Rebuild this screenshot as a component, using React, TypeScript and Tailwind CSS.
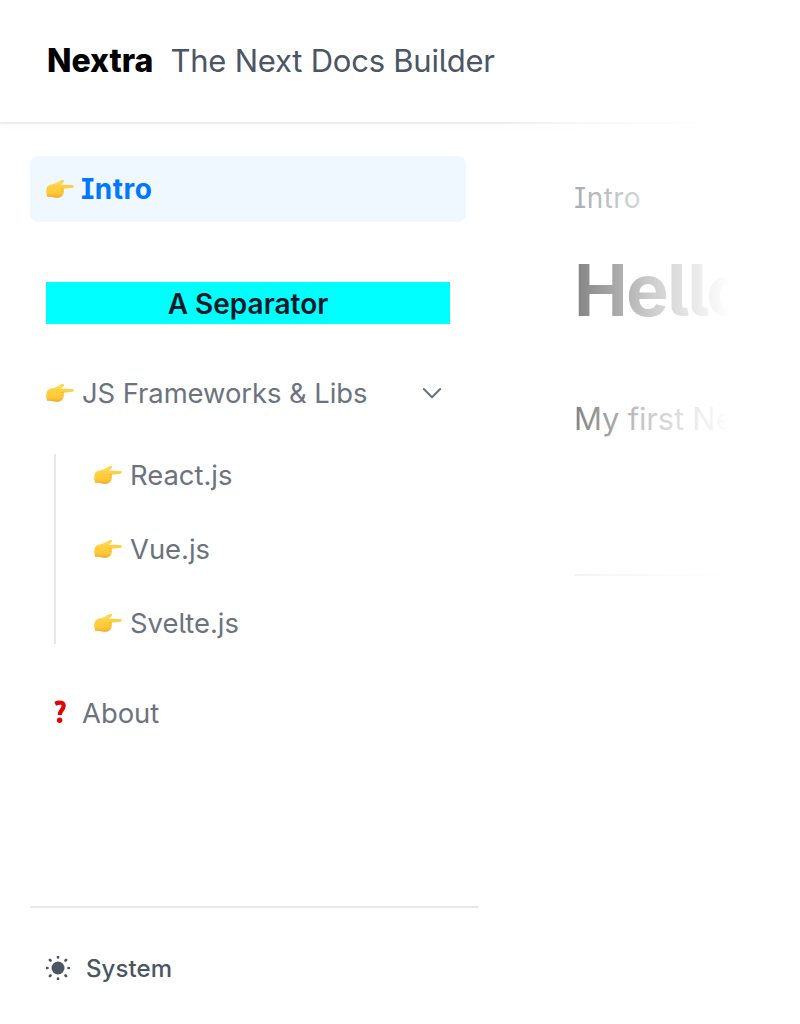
import type { ReactNode } from 'react';

function PointingHand() {
  return (
    <svg className="h-7 w-7 shrink-0" viewBox="0 0 28 28" aria-label="pointing right">
      <defs>
        <linearGradient id="skin" x1="0" y1="0" x2="0" y2="1">
          <stop offset="0" stopColor="#ffd64a" />
          <stop offset="0.75" stopColor="#ffc938" />
          <stop offset="1" stopColor="#f4b02a" />
        </linearGradient>
      </defs>
      <path
        d="M.4 14.2C.8 11.2 3.3 9.6 6.6 9.2C10.5 8.9 12.7 6.3 16 5.1C17.7 4.6 18.8 5.8 17.7 7.1C16.8 8.1 15.5 8.6 15.1 9.8L26.3 9.9C28.3 9.9 28.4 12.6 26.3 12.8L17.6 13.8C18.3 14.9 18.2 16 17.5 16.8C18 18 17.4 19.1 16.6 19.6C16.5 21.3 15.2 22.3 13.2 22.5C9.9 22.9 7.5 22.2 5.3 21.5L1.2 21.4C.2 19.5.1 16.6.4 14.2Z"
        fill="url(#skin)"
      />
      <path d="M17.5 13.8L15.3 13.5M17.3 16.8L15.2 16.7M16.4 19.7L14.5 19.6M1.2 21.3L5.3 21.4Q9 22.7 13.2 22.3" fill="none" stroke="#e39b22" strokeWidth=".6" />
      <path d="M9 10.2Q12.5 9.2 15.7 6.6" fill="none" stroke="#ffe06a" strokeWidth=".8" />
    </svg>
  );
}

function SidebarLink({ children }: { children: ReactNode }) {
  return (
    <a className="flex h-[66px] shrink-0 items-center px-4">
      <PointingHand />
      <span className="ml-2 text-[27.4px]">{children}</span>
    </a>
  );
}

export default function App() {
  return (
    <div className="relative h-[1024px] w-[800px] overflow-hidden bg-white font-['Inter',sans-serif] text-[28px] leading-[42px] text-gray-500 antialiased [font-feature-settings:'ss02'_1]">
      <header className="flex h-[122px] items-center pl-[47px] shadow-[0_2px_0_rgba(0,0,0,.06),0_4px_8px_rgba(0,0,0,.02)]">
        <span className="text-[32px] font-extrabold text-black">Nextra</span>
        <span className="ml-[17px] text-[31px] tracking-[-.22px] text-[#4b5563]">The Next Docs Builder</span>
      </header>
      <div className="flex h-[902px]">
        <aside className="flex w-[478px] flex-col pl-[30px] pt-[34px]">
          <nav className="w-[436px] text-[#6b7280]">
            <a className="flex h-[66px] items-center rounded-lg bg-[#eff7ff] px-4 font-bold text-[#0077ff]">
              <PointingHand />
              <span className="ml-[7px] tracking-[.5px]">Intro</span>
            </a>
            <div className="mx-4 mt-[60px] h-[42px] bg-[#00ffff] pt-px text-center font-semibold text-[#111827]">A Separator</div>
            <div className="mt-9 flex h-[66px] items-center pl-4 pr-[22px]">
              <PointingHand />
              <span className="ml-2 text-[27.4px] tracking-[-.05px]">JS Frameworks &amp; Libs</span>
              <svg className="ml-auto h-6 w-6" viewBox="0 0 24 24" fill="none" stroke="currentColor" strokeWidth="2" strokeLinecap="round" strokeLinejoin="round">
                <path d="M3.8 8L12 16.2L20.2 8" />
              </svg>
            </div>
            <div className="ml-6 mt-7 flex h-[190px] flex-col justify-center gap-2 border-l-2 border-[#e5e7eb] pl-[22px]">
              <SidebarLink>React.js</SidebarLink>
              <SidebarLink>Vue.js</SidebarLink>
              <SidebarLink>Svelte.js</SidebarLink>
            </div>
            <a className="mt-9 flex h-[66px] items-center px-4">
              <svg className="h-7 w-7" viewBox="0 0 28 28" aria-label="question">
                <path d="M9.2 4.7C14 2.7 18 3.5 17.6 7.3C17.3 10.8 13.8 11.2 13.8 16" fill="none" stroke="#e60000" strokeWidth="4.2" />
                <circle cx="13.6" cy="21.2" r="2.7" fill="#e60000" />
              </svg>
              <span className="ml-2 text-[27.4px]">About</span>
            </a>
          </nav>
          <footer className="mt-auto flex h-[118px] items-center border-t-2 border-[#e5e7eb] pl-4 pt-1 text-2xl font-medium text-[#4b5563]">
            <svg className="h-6 w-6" viewBox="0 0 24 24" fill="currentColor" stroke="currentColor">
              <circle cx="12" cy="12" r="6.5" stroke="none" />
              <path d="M12 .9V1.5M12 22.5V23.1M.9 12H1.5M22.5 12H23.1M3.9 3.9L4.5 4.5M19.5 19.5L20.1 20.1M3.9 20.1L4.5 19.5M19.5 4.5L20.1 3.9" strokeWidth="2.6" strokeLinecap="round" />
            </svg>
            <span className="ml-4 pt-0.5 tracking-[.1px]">System</span>
          </footer>
        </aside>
        <main className="ml-24 w-[226px] overflow-hidden whitespace-nowrap pt-[55px] text-black">
          <p className="tracking-[.4px] text-[#4b5563]">Intro</p>
          <h1 className="mt-[31px] text-[72px] font-bold leading-[80px] tracking-[-1.9px]">Hello</h1>
          <p className="mt-[61px] h-14 text-[31px] leading-[56px] tracking-[-.2px]">My first Nextra</p>
          <hr className="mt-[127px] border-t-2 border-[#e5e7eb]" />
        </main>
      </div>
      <div className="pointer-events-none absolute inset-y-0 right-0 w-[306px] bg-[linear-gradient(to_right,rgba(255,255,255,0)_0px,rgba(255,255,255,.52)_83px,rgba(255,255,255,.68)_126px,rgba(255,255,255,.8)_156px,rgba(255,255,255,.93)_206px,#fff_236px)]" />
    </div>
  );
}
